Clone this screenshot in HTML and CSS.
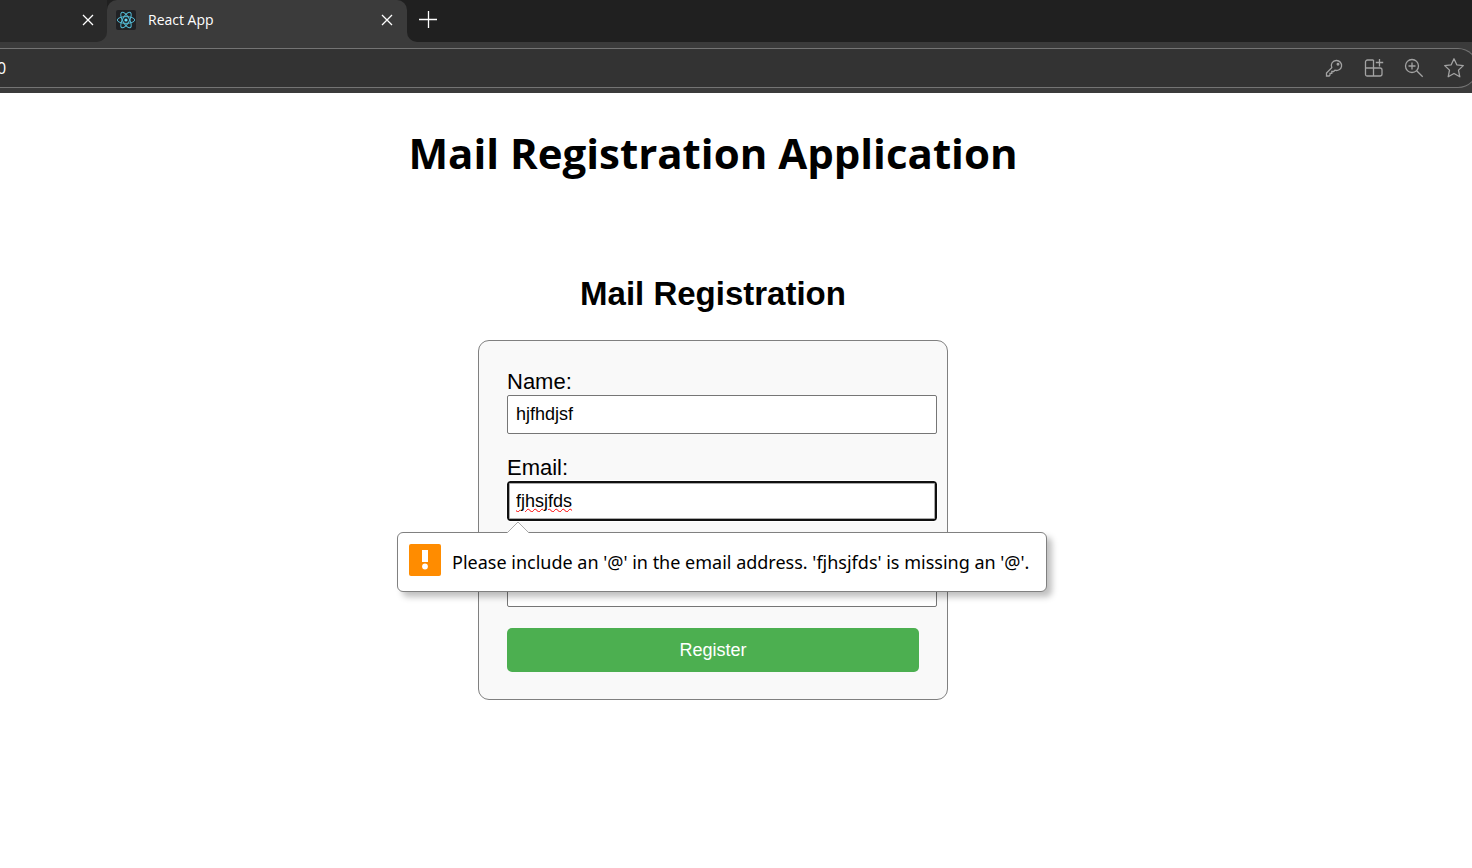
FILE: index.html
```html
<!DOCTYPE html>
<html lang="en">
<head>
<meta charset="utf-8">
<title>React App</title>
<link rel="stylesheet" href="styles.css">
</head>
<body>
<header class="browser">
  <div class="tabs">
    <div class="tab tab-inactive">
      <button class="icon-button" type="button" aria-label="Close tab"><svg width="12" height="12" viewBox="0 0 12 12"><path d="M1 1l10 10M11 1L1 11"/></svg></button>
    </div>
    <div class="tab tab-active">
      <svg class="favicon" width="20" height="20" viewBox="0 0 20 20">
        <rect width="20" height="20" rx="2" fill="#202124"/>
        <g fill="none" stroke="#53b9d3" stroke-width="1">
          <ellipse cx="10" cy="10" rx="8.7" ry="3.4"/>
          <ellipse cx="10" cy="10" rx="8.7" ry="3.4" transform="rotate(60 10 10)"/>
          <ellipse cx="10" cy="10" rx="8.7" ry="3.4" transform="rotate(120 10 10)"/>
        </g>
        <circle cx="10" cy="10" r="1.6" fill="#61dafb"/>
      </svg>
      <span class="tab-title">React App</span>
      <button class="icon-button" type="button" aria-label="Close tab"><svg width="12" height="12" viewBox="0 0 12 12"><path d="M1 1l10 10M11 1L1 11"/></svg></button>
    </div>
    <div class="strip">
      <button class="icon-button" type="button" aria-label="New tab"><svg width="18" height="18" viewBox="0 0 18 18"><path d="M0 9.500h18M9.500 1v17"/></svg></button>
    </div>
  </div>
  <div class="toolbar">
    <div class="address">
      <span class="url">0</span>
      <div class="actions">
        <button class="icon-button" type="button" aria-label="Passwords"><svg width="20" height="20" viewBox="0 0 20 20"><path d="M12.500 2.500a5 5 0 1 1-1.600 9.700L9.600 13.500H7.800v1.800H6v1.800l-.9.900H2.500v-3l5.300-5.300A5 5 0 0 1 12.500 2.500z"/><circle cx="14" cy="6.200" r=".8"/></svg></button>
        <button class="icon-button" type="button" aria-label="Apps"><svg width="20" height="20" viewBox="0 0 20 20"><path d="M9.500 2H3.500a2 2 0 0 0-2 2v12.500a1.500 1.500 0 0 0 1.500 1.500h13a2 2 0 0 0 2-2v-4a2 2 0 0 0-2-2H1.500M9.500 2v16M15.500 1v7.500M11.800 4.500h7.400"/></svg></button>
        <button class="icon-button" type="button" aria-label="Zoom"><svg width="20" height="20" viewBox="0 0 20 20"><circle cx="8" cy="8" r="6.500"/><path d="M12.700 12.700l6 6M4.500 8h7M8 4.500v7"/></svg></button>
        <button class="icon-button" type="button" aria-label="Add to favorites"><svg width="20" height="20" viewBox="0 0 20 20"><path stroke-linejoin="round" d="M10 .8l2.800 6 6.500.8-4.800 4.500 1.300 6.700-5.800-3.300-5.800 3.300 1.300-6.700L.7 7.600l6.500-.8z"/></svg></button>
      </div>
    </div>
  </div>
</header>
<main class="page">
  <h1 class="title">Mail Registration Application</h1>
  <h2 class="subtitle">Mail Registration</h2>
  <form class="form" novalidate>
    <div class="field">
      <label class="label" for="name">Name:</label>
      <input class="input" id="name" type="text" value="hjfhdjsf">
    </div>
    <div class="field">
      <label class="label" for="email">Email:</label>
      <input class="input input-current" id="email" type="email" value="fjhsjfds">
      <div class="popup" role="alert">
        <svg class="pointer" width="22" height="12" viewBox="0 0 22 12"><path d="M0 12L11 1l11 11" fill="#fff" stroke="#aaa"/></svg>
        <svg class="warning" width="32" height="32" viewBox="0 0 32 32"><rect width="32" height="32" rx="2" fill="#ff8c00"/><rect x="13" y="6" width="6" height="12" fill="#fff"/><circle cx="16" cy="22.500" r="2.900" fill="#fff"/></svg>
        <span>Please include an '@' in the email address. 'fjhsjfds' is missing an '@'.</span>
      </div>
    </div>
    <div class="field">
      <label class="label" for="password"></label>
      <input class="input" id="password" type="password" aria-label="Password">
    </div>
    <button class="submit" type="submit">Register</button>
  </form>
</main>
</body>
</html>
```
FILE: styles.css
```css
body {
  margin: 0;
  background: #fff;
  color: #000;
  font-family: "Liberation Sans", Arial, sans-serif;
}

.browser {
  overflow: hidden;
  background: #3b3b3b;
  font-family: "Open Sans", "Noto Sans", sans-serif;
}

.tabs {
  display: flex;
  height: 42px;
}

.tab {
  display: flex;
  align-items: center;
  box-sizing: border-box;
  padding-bottom: 2px;
}

.tab-inactive {
  width: 107px;
  justify-content: flex-end;
  padding-right: 13px;
  background: #292929;
  border-radius: 0 0 10px 0;
}

.tab-active {
  width: 300px;
  gap: 12px;
  padding-left: 9px;
  padding-right: 14px;
  background: #3b3b3b;
  border-radius: 10px 10px 0 0;
  box-shadow: 0 -10px 0 #202020;
}

.tab-title {
  flex: 1;
  color: #fff;
  font-size: 14px;
  line-height: 20px;
}

.strip {
  flex: 1;
  display: flex;
  align-items: center;
  padding-left: 12px;
  padding-bottom: 4px;
  background: #202020;
  border-bottom-left-radius: 10px;
}

.icon-button {
  display: flex;
  padding: 0;
  border: 0;
  background: none;
}

.icon-button svg {
  fill: none;
  stroke: #fff;
  stroke-width: 1.3;
}

.toolbar {
  padding: 6px 0 5px;
}

.address {
  display: flex;
  align-items: center;
  justify-content: space-between;
  box-sizing: border-box;
  height: 40px;
  margin-right: -6px;
  padding-right: 13px;
  background: #333;
  border: 1px solid #747474;
  border-left: 0;
  border-radius: 0 20px 20px 0;
}

.url {
  margin-left: -3px;
  color: #fff;
  font-size: 16px;
}

.actions {
  display: flex;
  gap: 20px;
}

.actions svg {
  stroke: #a3a3a3;
}

.page {
  display: flex;
  flex-direction: column;
  align-items: center;
  padding: 30px 46px 30px 0;
}

.title {
  margin: 0 0 92px;
  font-family: "Open Sans", "Noto Sans", sans-serif;
  font-size: 42px;
  line-height: 60px;
}

.subtitle {
  margin: 0 0 27px;
  font-size: 33px;
  line-height: 38px;
}

.form {
  box-sizing: border-box;
  width: 470px;
  padding: 28px 28px 27px;
  background: #f9f9f9;
  border: 1px solid #808080;
  border-radius: 11px;
}

.field {
  position: relative;
  margin-bottom: 21px;
}

.label {
  display: block;
  height: 26px;
  font-size: 22px;
  line-height: 26px;
}

.input {
  display: block;
  width: 100%;
  height: 21px;
  padding: 8px;
  background: #fff;
  border: 1px solid #767676;
  border-radius: 2px;
  color: #000;
  font-family: inherit;
  font-size: 18px;
}

.input-current {
  height: 20px;
  padding: 8px 7px;
  border: 2px solid #101010;
  border-radius: 3px;
  outline: 1px solid #fff;
  box-shadow: inset 0 0 0 1px #aaa;
  text-decoration: underline wavy #f00 1px;
  text-underline-offset: 1px;
}

.popup {
  position: absolute;
  z-index: 1;
  top: calc(100% + 11px);
  left: -110px;
  display: flex;
  align-items: center;
  gap: 11px;
  box-sizing: border-box;
  min-width: 650px;
  height: 60px;
  padding: 0 11px;
  background: #fff;
  border: 1px solid #808080;
  border-radius: 6px;
  box-shadow: 5px 5px 6px rgba(0, 0, 0, 0.25);
  font-family: "Noto Sans", "Open Sans", sans-serif;
  font-size: 18px;
  line-height: 24px;
  white-space: nowrap;
}

.pointer {
  position: absolute;
  left: 109px;
  bottom: 100%;
}

.warning {
  flex: none;
  margin-bottom: 4px;
}

.submit {
  display: block;
  width: 100%;
  height: 44px;
  padding: 0;
  background: #4caf50;
  border: 0;
  border-radius: 5px;
  color: #fff;
  font-family: inherit;
  font-size: 18px;
}
```
